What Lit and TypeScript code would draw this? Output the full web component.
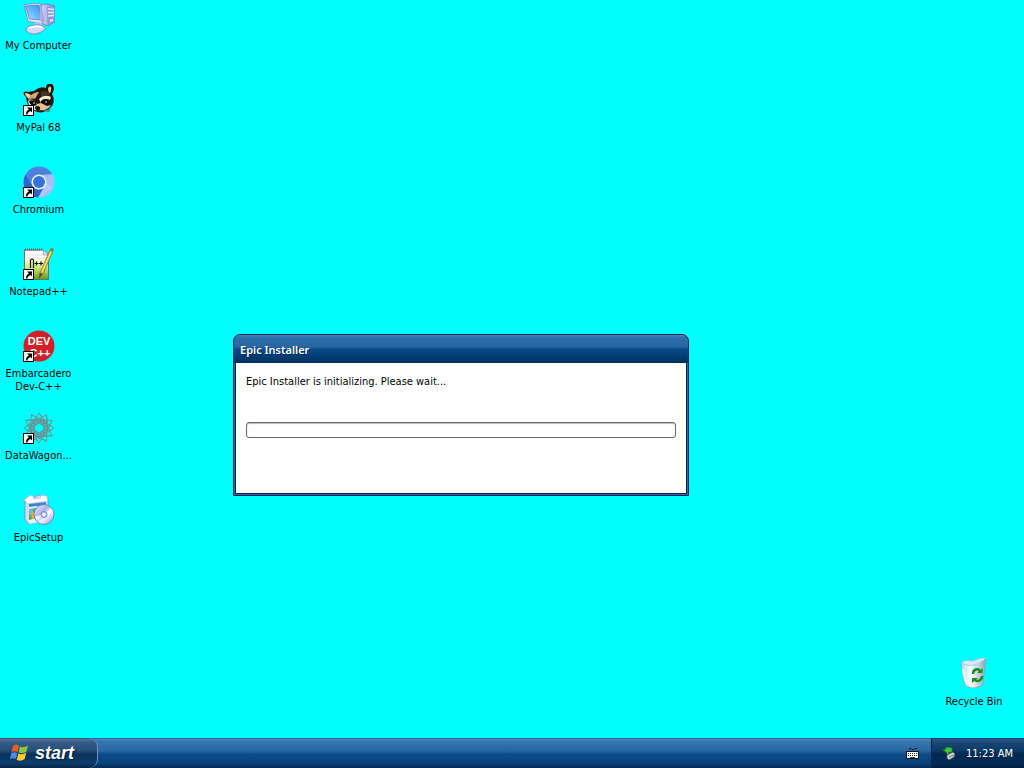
import { LitElement, html, svg, css } from "lit";
import { customElement, property } from "lit/decorators.js";

const arrow = svg`<rect x="0.5" y="21.500" width="10" height="10" fill="#fff" stroke="#000"/>
  <path d="M3 30.500c0-3 1-4 3-5L4 23.500h5v5L7.500 27c-2 1-3 1.500-3 3.500z" fill="#000"/>`;

const petals = [0, 30, 60, 90, 120, 150, 180, 210, 240, 270, 300, 330];

const pictures: Record<string, unknown> = {
  computer: svg`
    <defs>
      <linearGradient id="scr" x1="0" y1="1" x2="1" y2="0"><stop offset="0" stop-color="#b4eaff"/><stop offset=".5" stop-color="#63b6fa"/><stop offset="1" stop-color="#3f8cf0"/></linearGradient>
      <linearGradient id="twr" x1="0" x2="1"><stop offset="0" stop-color="#d0d3f5"/><stop offset="1" stop-color="#8c93cf"/></linearGradient>
    </defs>
    <path d="M18 3l6-1 8 2v16l-7 4-7-3z" fill="url(#twr)" stroke="#686fae" stroke-width=".7"/>
    <path d="M24 4l7.500 1v15l-7 3z" fill="#9299d8"/>
    <path d="M25 7l6 .5M25 10.500h6M25 14l6-.5" stroke="#e6e9ff" stroke-width="1.300"/>
    <path d="M27 17.500l3-.5v2l-3 1z" fill="#dfe3ff"/>
    <path d="M1 2.500L17 1l4 18-2 2.500-14-2z" fill="#e6e8fa" stroke="#7980b9" stroke-width=".8"/>
    <path d="M2.500 4L16 3l3 15-12.500-1z" fill="url(#scr)" stroke="#4475c8" stroke-width=".7"/>
    <path d="M17 2l4 17-2 2-2-3z" fill="#a9b0df"/>
    <path d="M12 20l7 1 1 5-7 2z" fill="#b8bce6"/>
    <path d="M3 27c1-3 6-4 11-4s9 2 8 4-7 5-11 5-8-2-8-5z" fill="#d8daf5" stroke="#7379b5" stroke-width=".8"/>
    <path d="M6 26c4-2 9-2 13-1" fill="none" stroke="#fff" stroke-width="1.700"/>`,
  raccoon: svg`
    <path d="M3 13C-1 10 0 6 5 8l6-1c4-3 8-5 12-3 0-5 4-6 6-4 3 3 2 7 0 10 3 5 2 11-2 14-5 5-12 6-17 2-4-2-6-6-7-13z" fill="#21180f"/>
    <path d="M3 12c-2-3-1-4 3-2l2 1-2 4zM25 5c1-4 4-3 3 1 0 2-1 3-2 3z" fill="#f0cfa4"/>
    <path d="M8 11c3-2 5-3 8-3l-4 7c-3-1-5 0-7 1z" fill="#cfa77c"/>
    <path d="M18 8c4-2 8 0 9 4-3-2-6-1-9 1z" fill="#4b3522"/>
    <path d="M16 15c4-4 8-4 12-2l-1 3c-4-2-7 0-9 3z" fill="#fbe8c9"/>
    <path d="M5 17c3-3 6-1 9 3l3 6c-6 2-11-2-12-9z" fill="#f3dfc0"/>
    <path d="M6 17c4-2 7 0 8 4-4 2-7 0-8-4zM18 17c3-3 7-2 10 0-2 5-6 5-10 3z" fill="#0c0a0a"/>
    <circle cx="11" cy="19" r=".8" fill="#fff"/><circle cx="23" cy="18" r=".8" fill="#fff"/>
    <path d="M14 20l4-1 6 3c2 0 3-1 4-1-2 4-7 6-12 5l-4-2z" fill="#e8bd92"/>
    <path d="M12 23c2-2 6-1 5 2s-5 2-5-2z" fill="#111"/>
    <path d="M20 27l8-3-2 4z" fill="#2d8f88"/>
    ${arrow}`,
  chromium: svg`
    <circle cx="16" cy="16" r="15.500" fill="#a6bff3"/>
    <path d="M2.600 8.200A15.500 15.500 0 0 1 29.400 8.200L16 9a7 7 0 0 0-6.500 10z" fill="#4c82dc"/>
    <path d="M2.600 8.200A15.500 15.500 0 0 0 15 31.500L21.500 20.500a7 7 0 0 1-12-1z" fill="#2b67c9"/>
    <path d="M23 16l6 6-13 9.500 5.500-11z" fill="#b7caff"/>
    <circle cx="16" cy="16" r="7.500" fill="#e9f3ff"/><circle cx="16" cy="16" r="6" fill="#3573d7"/>
    ${arrow}`,
  notepad: svg`
    <defs><linearGradient id="pad" x1="0" y1="0" x2="0" y2="1"><stop offset=".25" stop-color="#fff"/><stop offset=".55" stop-color="#d7ec8d"/><stop offset="1" stop-color="#5c9d18"/></linearGradient></defs>
    <path d="M1.500 2h19l5 5v24.500h-24z" fill="url(#pad)" stroke="#657565"/>
    <path d="M20.500 2v5h5z" fill="#dfe4ea" stroke="#8794a0" stroke-width=".7"/>
    <path d="M2 1.500h18" stroke="#58636e" stroke-width="2" stroke-dasharray="1 1"/>
    <path d="M3 7h17M3 10h21" stroke="#c7ced1" stroke-width=".6"/>
    <path d="M7.500 20v-8q1.500-2 3 0v8M11.500 15.500h4M13.500 13.500v4M16 15.500h4M18 13.500v4" fill="none" stroke="#111" stroke-width="1.200"/>
    <path d="M17 25L27 2l3 1-10 23-4 4z" fill="#e2b93e" stroke="#816716" stroke-width=".7"/>
    <path d="M27 2l1-2 3 1-1 2z" fill="#6c7a50"/><path d="M16 30l1-5 3 1z" fill="#5e3d22"/>
    <path d="M19 24l9-20" stroke="#fff1a0"/>
    ${arrow}`,
  dev: svg`
    <circle cx="16" cy="16" r="15.500" fill="#d22029"/>
    <g font-family="Liberation Sans, sans-serif" font-weight="700" font-size="11" fill="#fff" text-anchor="middle">
      <text x="16" y="15">DEV</text><text x="17" y="27">C++</text>
    </g>
    ${arrow}`,
  wagon: svg`
    <g fill="none" stroke="#6d9295" stroke-width=".9">
      ${petals.map((a) => svg`<g transform="rotate(${a} 16 16)"><path d="M12 7L16 .8l4 6.200-4 5z"/><path d="M16 1l7 9-9-3M13 11l3-4 3 4"/></g>`)}
      <circle cx="16" cy="16" r="5.500"/>
    </g>
    ${arrow}`,
  setup: svg`
    <defs><linearGradient id="disc" x1="0" y1="0" x2="1" y2="1"><stop offset="0" stop-color="#eef0ff"/><stop offset=".4" stop-color="#a9b5e9"/><stop offset=".6" stop-color="#f5eeff"/><stop offset="1" stop-color="#8290cf"/></linearGradient></defs>
    <path d="M2 7l14-6 9 3v22l-19 4-4-4z" fill="#d5dcf5" stroke="#7581b7" stroke-width=".7"/>
    <path d="M6 9l18-2v20L6 30z" fill="#eef2ff"/>
    <path d="M1 6l6-5 3 1 1 3 6-1 1-3 6 1 1 5L5 10z" fill="#fff" stroke="#a1aad2" stroke-width=".6"/>
    <path d="M6 10l17-2v3L6 13z" fill="#3986d2"/>
    <path d="M6 15l8-1v10l-8 2z" fill="#48ad52"/><path d="M6 15l4-.5v5l-4 2z" fill="#6bb8ea"/><path d="M8 19l3-1 2 6-4 1z" fill="#e7b53b"/>
    <circle cx="21" cy="20.500" r="10" fill="url(#disc)" stroke="#6774b2" stroke-width=".8"/>
    <path d="M21 20.500l7-6 2 4zM21 20.500l-7 6-2-4z" fill="#fff" opacity=".8"/>
    <circle cx="21" cy="20.500" r="3" fill="#cdd5fa" stroke="#7581c5"/><circle cx="21" cy="20.500" r="1.300" fill="#fff"/>`,
  bin: svg`
    <defs><linearGradient id="glass" x1="0" x2="1"><stop offset="0" stop-color="#b6dbf1"/><stop offset=".4" stop-color="#f9fdff"/><stop offset="1" stop-color="#84a8bd"/></linearGradient></defs>
    <path d="M3 5c9 3 18 1 25-4l-3 25c-4 5-14 5-18 1z" fill="url(#glass)" stroke="#7ea6bc" stroke-width=".8"/>
    <path d="M3 5c3-3 8-3 12-2 5-2 10-4 13-3-7 7-16 10-25 5z" fill="#d5ebfa" stroke="#94c2da" stroke-width=".7"/>
    <path d="M5 11c1 7 2 12 4 15" fill="none" stroke="#fff" stroke-width="2"/>
    <g fill="none" stroke="#218b20" stroke-width="2.500"><path d="M15 16c0-5 5-6 7-3M24 18c0 5-5 6-7 4"/></g>
    <path d="M19 15h5.500v-5zM20 20h-6v5z" fill="#218b20"/>`,
};

@customElement("desktop-icon")
class DesktopIcon extends LitElement {
  @property() picture = "";
  @property() label = "";

  static styles = css`
    .icon { display: flex; flex-direction: column; align-items: center; gap: 4px; width: 100%; padding: 2px 0 0; border: 0; background: none; color: #000; font: 11px/13px "DejaVu Sans Condensed", "Noto Sans", sans-serif; }
    svg { display: block; width: 32px; height: 33px; }
    .label { width: 72px; }
  `;

  render() {
    return html`<button class="icon">
      <svg viewBox="0 0 32 33" aria-hidden="true">${pictures[this.picture]}</svg>
      <span class="label">${this.label}</span>
    </button>`;
  }
}

@customElement("app-root")
class AppRoot extends LitElement {
  static styles = css`
    :host { display: flex; flex-direction: column; height: 100vh; overflow: hidden; background: #0ff; font: 11px/13px "DejaVu Sans Condensed", "Noto Sans", sans-serif; color: #000; }
    .desktop { position: relative; flex: 1; min-height: 0; }
    .shortcuts { display: grid; grid-auto-rows: 82px; width: 77px; }
    .bin { position: absolute; right: 12px; bottom: 30px; width: 76px; }
    .window { position: absolute; left: 233px; top: 334px; width: 456px; box-sizing: border-box; border: 1px solid #04234f; border-radius: 7px 7px 0 0; background: #2c6aa6; padding: 0 1px 1px; }
    .title { height: 28px; margin: 0 -1px; padding: 0 6px; box-sizing: border-box; border-radius: 6px 6px 0 0; font: 600 11px/30px "Noto Sans", sans-serif; color: #fff; text-shadow: 1px 1px #062b59; background: linear-gradient(#4d8ac0, #2f70ad 2px, #2865a1 12px, #0b4a87 14px, #034078 20px, #02305f 27px); }
    .body { padding: 12px 10px 56px; height: 62px; background: #fff; border: 1px solid #04234f; border-top: 0; }
    .message { display: block; margin-bottom: 34px; }
    progress { display: block; appearance: none; width: 100%; height: 16px; box-sizing: border-box; border: 1px solid #686868; border-radius: 3px; background: #fff; box-shadow: inset 0 1px 1px #bbb; }
    progress::-webkit-progress-bar { background: transparent; }
    progress::-webkit-progress-value { background: #3b9b35; }
    .taskbar { display: flex; height: 30px; background: linear-gradient(#143d67, #4d8abd 1px, #3878b0 3px, #2766a0 13px, #0c4d88 16px, #084279 25px, #022c56); }
    .start { display: flex; align-items: center; gap: 6px; width: 98px; padding: 0 0 0 10px; border: 0; border-right: 1px solid #6596c1; border-radius: 0 9px 9px 0; background: linear-gradient(#173452, #587998 1px, #355d86 4px, #244d79 13px, #09315d 16px, #0d3c6c 25px, #062447); color: #fff; font: italic bold 18px/28px "Liberation Sans", sans-serif; text-shadow: 1px 1px 1px #001b38; }
    .start svg { width: 19px; height: 19px; }
    .tray { display: flex; align-items: center; margin-left: auto; color: #fff; }
    .keyboard { display: flex; margin-right: 12px; padding: 0; border: 0; background: none; }
    .notify { display: flex; align-items: center; gap: 9px; align-self: stretch; width: 93px; box-sizing: border-box; padding: 0 0 0 11px; border-left: 1px solid #052143; background: linear-gradient(#102a48, #2b5784 1px, #194773 5px, #0d3866 13px, #032850 16px, #042b55 25px, #011c3d); }
  `;

  private shortcuts = [
    ["computer", "My Computer"],
    ["raccoon", "MyPal 68"],
    ["chromium", "Chromium"],
    ["notepad", "Notepad++"],
    ["dev", "Embarcadero Dev-C++"],
    ["wagon", "DataWagon..."],
    ["setup", "EpicSetup"],
  ];

  render() {
    return html`
      <main class="desktop">
        <nav class="shortcuts">
          ${this.shortcuts.map(([picture, label]) => html`<desktop-icon picture=${picture} label=${label}></desktop-icon>`)}
        </nav>
        <desktop-icon class="bin" picture="bin" label="Recycle Bin"></desktop-icon>
        <section class="window">
          <header class="title">Epic Installer</header>
          <div class="body">
            <label class="message" for="setup-progress">Epic Installer is initializing. Please wait...</label>
            <progress id="setup-progress" max="100" value="0"></progress>
          </div>
        </section>
      </main>
      <footer class="taskbar">
        <button class="start">
          <svg viewBox="0 0 19 19" aria-hidden="true">
            <path d="M3 2c2-2 4-1 6 0L7.500 8c-2-1-4-1-6 0z" fill="#ee5c28"/>
            <path d="M10 2.500c2 1 5 1 8-1L16.500 7.500c-3 2-5 2-8 1z" fill="#88c83c"/>
            <path d="M1.300 9c2-1 4-1 6 0L5.800 15c-2-1-4-1-6 0z" fill="#5289e8"/>
            <path d="M8.300 9.500c2 1 5 1 8-1L14.700 15c-3 2-5 2-8 1z" fill="#ffcc2e"/>
          </svg>
          <span>start</span>
        </button>
        <div class="tray">
          <button class="keyboard" aria-label="Keyboard">
            <svg width="13" height="14" viewBox="0 0 13 14" aria-hidden="true">
              <path d="M3 2.500h2l1 1h2l1-1h2" fill="none" stroke="#0b1625"/>
              <rect x=".5" y="5.500" width="12" height="7" fill="#fff" stroke="#111"/>
              <path d="M2 7.500h9M2 9.500h9" stroke="#222" stroke-dasharray="1 1"/><path d="M4 11.500h5" stroke="#444"/>
            </svg>
          </button>
          <div class="notify">
            <svg width="14" height="14" viewBox="0 0 14 14" aria-hidden="true">
              <path d="M4 9l6-3 2 2-1 3-5 3-2-2z" fill="#d2d6d8" stroke="#4c565c" stroke-width=".8"/>
              <path d="M6 11l5-2" stroke="#697479"/>
              <path d="M0 4l3-1 0-2 6 1v4L6 6 5 9 3 6z" fill="#45c63b" stroke="#168927" stroke-width=".7"/>
            </svg>
            <time>11:23 AM</time>
          </div>
        </div>
      </footer>
    `;
  }
}
